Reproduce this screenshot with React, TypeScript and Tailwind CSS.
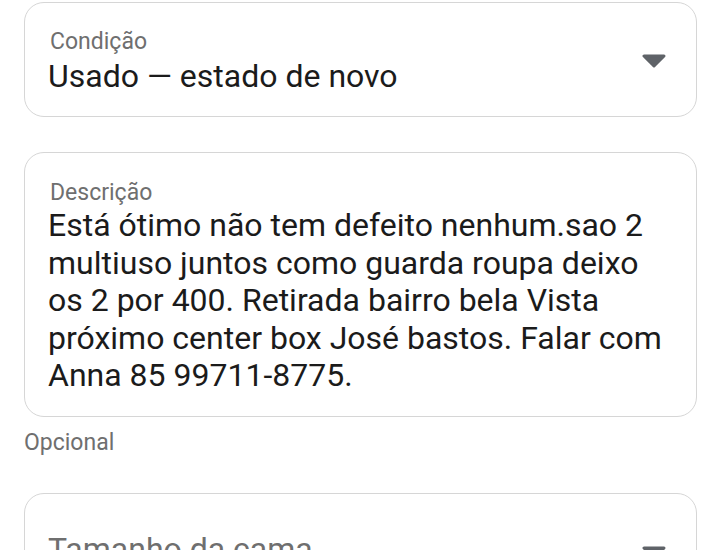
import React from 'react';

const Caret: React.FC = () => (
  <svg width="24" height="14" viewBox="0 0 24 14" className="shrink-0">
    <path d="M2 2 H22 L12 12 Z" fill="#5f6368" stroke="#5f6368" strokeWidth="3" strokeLinejoin="round" />
  </svg>
);

export default function App() {
  return (
    <div
      className="w-[720px] h-[550px] overflow-hidden bg-white pl-[24px] pr-[23px] pt-[2px]"
      style={{ fontFamily: 'Roboto, "Noto Sans", sans-serif' }}
    >
      {/* Condição */}
      <div className="flex items-center h-[115px] rounded-[20px] border border-[#d6d6d6] pl-[25px] pr-[30px]">
        <div className="flex-1 pt-[4px]">
          <div className="text-[23px] leading-[29px] text-[#6f6f6f]">Condição</div>
          <div className="text-[32px] leading-[40px] text-[#1b1b1b] -ml-[2px]">Usado — estado de novo</div>
        </div>
        <div className="mt-[2px]">
          <Caret />
        </div>
      </div>

      {/* Descrição */}
      <div className="mt-[35px] h-[265px] rounded-[20px] border border-[#d6d6d6] pl-[23px] pr-[18px] pt-[25px]">
        <div className="text-[23px] leading-[29px] text-[#6f6f6f] pl-[2px]">Descrição</div>
        <p className="text-[32px] leading-[37.5px] text-[#1b1b1b]">
          Está ótimo não tem defeito nenhum.sao 2 multiuso juntos como guarda roupa deixo os 2 por 400. Retirada bairro bela Vista próximo center box José bastos. Falar com Anna 85 99711-8775.
        </p>
      </div>
      <div className="mt-[12px] text-[23px] leading-[28px] text-[#6f6f6f]">Opcional</div>

      {/* Tamanho */}
      <div className="mt-[36px] flex items-start h-[115px] rounded-[20px] border border-[#d6d6d6] pl-[25px] pr-[30px] pt-[35px]">
        <div className="flex-1 text-[32px] leading-[40px] text-[#6f6f6f] -ml-[2px]">Tamanho da cama</div>
        <div className="mt-[17px]">
          <Caret />
        </div>
      </div>
    </div>
  );
}
